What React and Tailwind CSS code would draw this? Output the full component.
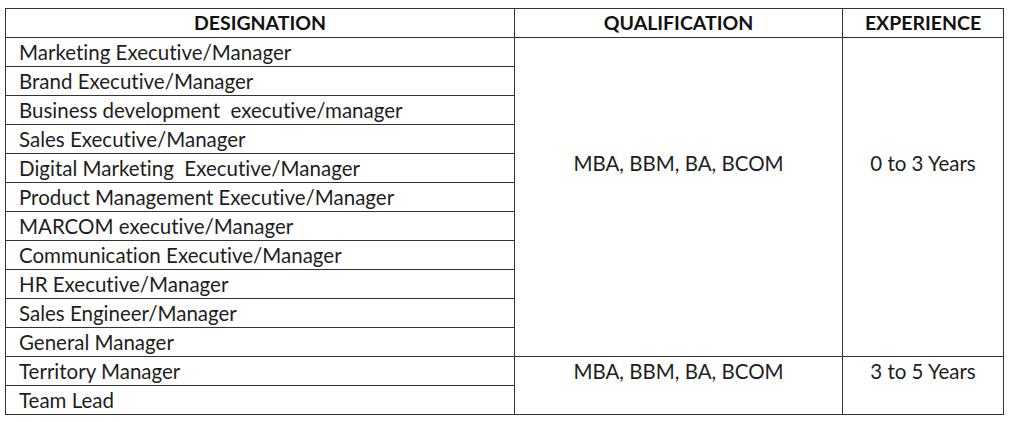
const designations = [
  "Marketing Executive/Manager",
  "Brand Executive/Manager",
  "Business development  executive/manager",
  "Sales Executive/Manager",
  "Digital Marketing  Executive/Manager",
  "Product Management Executive/Manager",
  "MARCOM executive/Manager",
  "Communication Executive/Manager",
  "HR Executive/Manager",
  "Sales Engineer/Manager",
  "General Manager",
];

const cell = "border border-[#333] h-[28px] p-0 leading-[28px]";
const merged = "border border-[#333] p-0 align-top text-center leading-[28px]";

export default function App() {
  return (
    <div className="min-h-screen bg-white pt-[8px] pl-[5px]" style={{ fontFamily: "Lato, 'Liberation Sans', sans-serif" }}>
      <table className="border-collapse text-[20.5px] text-[#1e1e1e] whitespace-pre [font-variant-ligatures:none]">
        <colgroup>
          <col className="w-[509px]" />
          <col className="w-[328px]" />
          <col className="w-[161px]" />
        </colgroup>
        <thead>
          <tr>
            <th className={`${cell} text-[19.5px] font-bold text-[#111] text-center`}>DESIGNATION</th>
            <th className={`${cell} text-[19.5px] font-bold text-[#111] text-center`}>QUALIFICATION</th>
            <th className={`${cell} text-[19.5px] font-bold text-[#111] text-center`}>EXPERIENCE</th>
          </tr>
        </thead>
        <tbody>
          {designations.map((d, i) => (
            <tr key={d}>
              <td className={`${cell} pl-[13px]`}>{d}</td>
              {i === 0 && (
                <>
                  <td rowSpan={11} className={`${merged} pt-[111px]`}>
                    MBA, BBM, BA, BCOM
                  </td>
                  <td rowSpan={11} className={`${merged} pt-[111px]`}>
                    0 to 3 Years
                  </td>
                </>
              )}
            </tr>
          ))}
          <tr>
            <td className={`${cell} pl-[13px]`}>Territory Manager</td>
            <td rowSpan={2} className={merged}>
              MBA, BBM, BA, BCOM
            </td>
            <td rowSpan={2} className={merged}>
              3 to 5 Years
            </td>
          </tr>
          <tr>
            <td className={`${cell} pl-[13px]`}>Team Lead</td>
          </tr>
        </tbody>
      </table>
    </div>
  );
}
